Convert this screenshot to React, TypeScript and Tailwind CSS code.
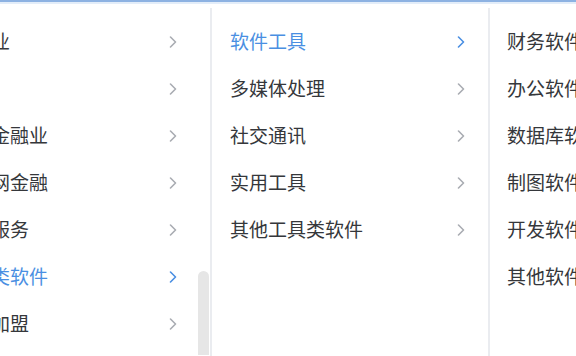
import React from 'react';

const FONT = { fontFamily: '"Noto Sans CJK SC", "Noto Sans", sans-serif' };

const Chevron: React.FC<{ active?: boolean }> = ({ active }) => (
  <svg width="8" height="12" viewBox="0 0 8 12" fill="none" className={active ? 'text-[#4a8fe2]' : 'text-[#a9acb2]'}>
    <path d="M1.5 1L6.5 6L1.5 11" stroke="currentColor" strokeWidth="1.6" strokeLinecap="round" strokeLinejoin="round" />
  </svg>
);

const INDUSTRIES = ['制造业', '游戏', '传统金融业', '互联网金融', '企业服务', '工具类软件', '连锁加盟'];
const TOOLS = ['软件工具', '多媒体处理', '社交通讯', '实用工具', '其他工具类软件'];
const SOFTWARE = ['财务软件', '办公软件', '数据库软件', '制图软件', '开发软件', '其他软件'];

const App: React.FC = () => {
  return (
    <div className="w-[576px] h-[356px] overflow-hidden bg-white flex flex-col" style={FONT}>
      {/* input focus edge */}
      <div className="h-[2px] bg-[#8db2e2]" />
      <div className="h-[2px] bg-[#e3edf9]" />

      <div className="flex flex-1 min-h-0 pt-[4px]">
        {/* Column 1: industries (scrolled, clipped on the left) */}
        <div className="relative w-[212px] border-r-2 border-[#eaecf0] overflow-hidden">
          <ul className="pt-[10px]">
            {INDUSTRIES.map((name, i) => (
              <li key={name} className="h-[47px] flex items-center">
                <span className={`ml-[-47px] whitespace-nowrap text-[19px] ${i === 5 ? 'text-[#4a8fe2]' : 'text-[#35373b]'}`}>
                  {name}
                </span>
                <span className="absolute left-[169px]">
                  <Chevron active={i === 5} />
                </span>
              </li>
            ))}
          </ul>
          {/* scrollbar thumb */}
          <div className="absolute left-[198px] top-[263px] w-[11px] h-[84px] rounded-t-[6px] bg-[#e6e6e6]" />
        </div>

        {/* Column 2: tools */}
        <div className="w-[278px] border-r-2 border-[#eaecf0]">
          <ul className="pt-[10px]">
            {TOOLS.map((name, i) => (
              <li key={name} className="h-[47px] flex items-center pl-[18px] pr-[23px] justify-between">
                <span className={`whitespace-nowrap text-[19px] ${i === 0 ? 'text-[#4a8fe2]' : 'text-[#35373b]'}`}>
                  {name}
                </span>
                <Chevron active={i === 0} />
              </li>
            ))}
          </ul>
        </div>

        {/* Column 3: software */}
        <div className="flex-1 overflow-hidden">
          <ul className="pt-[10px]">
            {SOFTWARE.map((name) => (
              <li key={name} className="h-[47px] flex items-center pl-[17px]">
                <span className="whitespace-nowrap text-[19px] text-[#35373b]">{name}</span>
              </li>
            ))}
          </ul>
        </div>
      </div>
    </div>
  );
};

export default App;
